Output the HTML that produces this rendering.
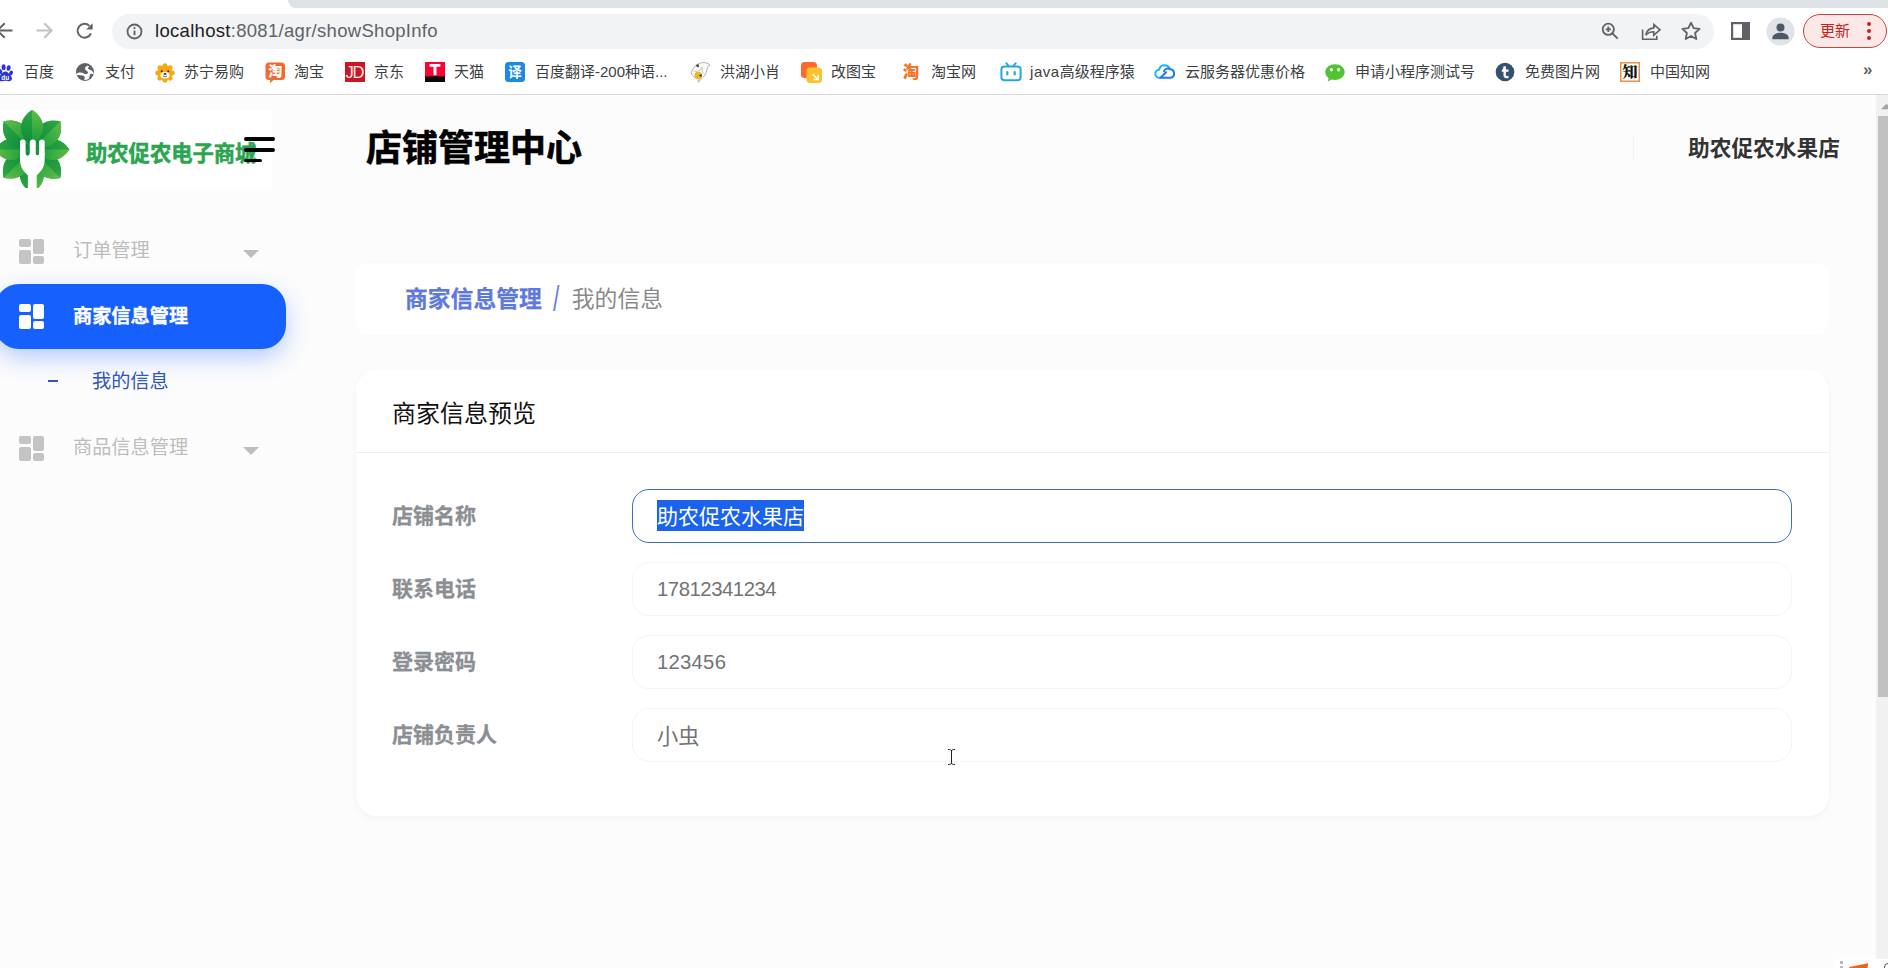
<!DOCTYPE html>
<html lang="zh-CN">
<head>
<meta charset="utf-8">
<title>店铺管理中心</title>
<style>
*{box-sizing:border-box;margin:0;padding:0}
html,body{width:1888px;height:968px;overflow:hidden;background:#fcfcfc}
body{position:relative;font-family:"Liberation Sans","Noto Sans CJK SC",sans-serif;color:#333}
.abs{position:absolute}
/* ---------- browser chrome ---------- */
#chrome{position:absolute;left:0;top:0;width:1888px;height:95px;background:#fff;border-bottom:1px solid #d9dadc}
#tabstrip{position:absolute;left:288px;top:0;width:1600px;height:8px;background:#dee1e6;border-bottom-left-radius:8px}
#omni{position:absolute;left:112px;top:14px;width:1602px;height:35px;border-radius:18px;background:#f1f3f4}
#url{position:absolute;left:155px;top:19px;font-size:18.5px;line-height:24px;color:#202124;white-space:nowrap;letter-spacing:.3px}
#url span{color:#5f6368}
.bm{position:absolute;top:61px;height:22px;line-height:22px;font-size:15px;color:#3c4043;white-space:nowrap}
.ico{position:absolute}
#upd{position:absolute;left:1803px;top:14px;width:84px;height:34px;border-radius:17px;border:1.5px solid #c9433e;background:#fce8e6}
#upd i{position:absolute;left:63px;width:4px;height:4px;border-radius:2px;background:#c5221f}
#upd i:nth-of-type(1){top:6.5px}#upd i:nth-of-type(2){top:13.5px}#upd i:nth-of-type(3){top:20.5px}
#upd b{position:absolute;left:16px;top:4px;font-weight:400;font-size:15px;line-height:24px;color:#c5221f}
/* ---------- page ---------- */
#page{position:absolute;left:0;top:95px;width:1876px;height:873px;background:#fcfcfc;overflow:hidden}
#sb{position:absolute;left:1876px;top:95px;width:12px;height:873px;background:#f1f1f1}
#sb i{position:absolute;left:2px;top:21px;width:10px;height:581px;background:#c1c1c1}
#logo{position:absolute;left:0;top:15px;width:272px;height:79px;background:#fff;overflow:hidden}
#logo span{position:absolute;left:86px;top:28px;font-size:21.3px;line-height:32px;font-weight:700;color:#2ba550;-webkit-text-stroke:.55px #2ba550;white-space:nowrap;letter-spacing:0}
.ham{position:absolute;left:244px;height:3.5px;border-radius:2px;background:#050505}
h1{position:absolute;left:366px;top:27px;-webkit-text-stroke:.6px #000;font-size:36px;line-height:54px;font-weight:700;color:#000;white-space:nowrap}
#shop{position:absolute;left:1688px;top:37.5px;font-size:21.7px;line-height:32px;font-weight:700;color:#333;white-space:nowrap}
.mi{position:absolute;left:73px;font-size:19.2px;line-height:30px;color:#bdbdbd;white-space:nowrap}
.grid{position:absolute;left:19px;width:25px;height:25px}
.grid i{position:absolute;background:#c4c4c4;border-radius:2px}
.grid i:nth-child(1){left:0;top:0;width:11.5px;height:8px}
.grid i:nth-child(2){left:0;top:10.5px;width:11.5px;height:14.5px}
.grid i:nth-child(3){left:13.5px;top:0;width:11.5px;height:14.5px}
.grid i:nth-child(4){left:13.5px;top:17px;width:11.5px;height:8px}
.caret{position:absolute;left:243px;width:0;height:0;border-left:8px solid transparent;border-right:8px solid transparent;border-top:8px solid #bdbdbd}
#pill{position:absolute;left:-5px;top:189px;width:291px;height:65px;border-radius:24px;background:#1660fd;box-shadow:0 9px 24px rgba(22,96,253,.3)}
#pill .mi{left:78px;top:18px;color:#fff;font-weight:700;-webkit-text-stroke:.35px #fff}
#pill .grid{left:24px;top:20px}
#pill .grid i{background:#fff}
.card{position:absolute;background:#fff;border-radius:18px}
#bc{left:355px;top:168px;width:1474px;height:72px;border-radius:14px;box-shadow:0 0 10px rgba(0,0,0,.012)}
#bc .t{position:absolute;left:50px;top:18.500px;font-size:22.8px;line-height:34px;white-space:nowrap;color:#8a8a8a}
#bc .t b{color:#5d79de;-webkit-text-stroke:.25px #5d79de;font-weight:700}
#bc .t em{font-style:normal;color:#6a7fdc;font-size:23px;display:inline-block;width:30px;text-align:center;vertical-align:0;line-height:30px;transform:translate(-.5px,0) scaleY(1.5)}
#main{left:356px;top:275px;width:1473px;height:446px;border-radius:21px;box-shadow:0 3px 7px rgba(0,0,0,.035),0 0 2px rgba(0,0,0,.02)}
#main h2{position:absolute;left:36px;top:25.5px;font-size:24px;line-height:36px;font-weight:400;color:#111;white-space:nowrap}
#main hr{position:absolute;left:0;top:82px;width:1473px;height:1px;border:0;background:#efefef}
.lb{position:absolute;left:36px;font-size:21px;line-height:32px;font-weight:700;color:#8b8e93;-webkit-text-stroke:.3px #8b8e93;white-space:nowrap}
.ip{position:absolute;left:276px;width:1160px;height:53.5px;border-radius:17px;border:1px solid #f4f4f4;background:#fff;font-size:20.3px;line-height:52px;color:#737373;padding-left:24px;white-space:nowrap}
.ip.f{border:1px solid #3d6ccb;font-size:21px}
.ip.f span{position:absolute;left:24px;top:10px;line-height:33.5px;height:30.5px;overflow:hidden;background:#1b62ee;color:#fff}
</style>
</head>
<body>
<div id="chrome">
  <div id="tabstrip"></div>
  <div id="omni"></div>
  <div id="url">localhost<span>:8081/agr/showShopInfo</span></div>

  <!-- nav icons -->
  <svg class="ico" style="left:-4px;top:22px" width="17" height="17" viewBox="0 0 17 17" fill="none" stroke="#5f6368" stroke-width="2"><path d="M16.5 8.5H1.5M8.7 1.2L1.4 8.5l7.3 7.3"/></svg>
  <svg class="ico" style="left:36px;top:22px" width="17" height="17" viewBox="0 0 17 17" fill="none" stroke="#c0c2c5" stroke-width="2"><path d="M0.5 8.5H15.5M8.3 1.2l7.3 7.3-7.3 7.3"/></svg>
  <svg class="ico" style="left:75px;top:21px" width="20" height="20" viewBox="0 0 20 20" fill="none" stroke="#5f6368" stroke-width="2"><path d="M15.9 12.3A6.9 6.9 0 1 1 14.4 4.9"/><path d="M17.6 2.2v6.4h-6.4z" fill="#5f6368" stroke="none"/></svg>
  <svg class="ico" style="left:125px;top:22px" width="19" height="19" viewBox="0 0 19 19" fill="none" stroke="#5f6368" stroke-width="1.8"><circle cx="9.5" cy="9.5" r="7"/><path d="M9.5 8.6v4.6" stroke-width="1.9"/><circle cx="9.5" cy="6.1" r="1.1" fill="#5f6368" stroke="none"/></svg>
  <!-- omnibox right icons -->
  <svg class="ico" style="left:1600px;top:21px" width="20" height="20" viewBox="0 0 20 20" fill="none" stroke="#5f6368" stroke-width="1.8"><circle cx="8.3" cy="8.3" r="5.6"/><path d="M12.5 12.5l5.2 5.2M5.6 8.3h5.4M8.3 5.6v5.4"/></svg>
  <svg class="ico" style="left:1640px;top:21px" width="22" height="20" viewBox="0 0 22 20" fill="none" stroke="#5f6368" stroke-width="1.6"><path d="M2.6 8.6v9.6h14.2v-3.4"/><path d="M5.8 14.2c.8-4.6 3.6-6.9 8-7.3V3.4l6.2 5.4-6.2 5.4v-3.5c-3.6 0-6 1-8 3.5z"/></svg>
  <svg class="ico" style="left:1680px;top:20px" width="22" height="22" viewBox="0 0 22 22" fill="none" stroke="#5f6368" stroke-width="1.8" stroke-linejoin="round"><path d="M11 2.6l2.6 5.6 6 .7-4.5 4.1 1.2 6L11 16l-5.3 3 1.2-6L2.4 8.9l6-.7z"/></svg>
  <svg class="ico" style="left:1731px;top:22px" width="19" height="18" viewBox="0 0 19 18"><rect x="1.1" y="1.1" width="16.8" height="15.8" fill="#fff" stroke="#5f6368" stroke-width="2.2"/><rect x="11" y="0" width="8" height="18" fill="#5f6368"/></svg>
  <svg class="ico" style="left:1766px;top:17px" width="29" height="29" viewBox="0 0 29 29"><circle cx="14.5" cy="14.5" r="14" fill="#e1e3e8"/><circle cx="14.5" cy="10.6" r="4" fill="#4d5868"/><path d="M6.4 20.6c0-3.6 5.4-4.9 8.1-4.9s8.1 1.3 8.1 4.9v1.6H6.4z" fill="#4d5868"/></svg>
  <div id="upd"><b>更新</b><i></i><i></i><i></i></div>

  <!-- bookmarks -->
  <svg class="ico" style="left:-3px;top:63px" width="16" height="20" viewBox="0 0 16 20"><g fill="#2932e1"><ellipse cx="3.2" cy="8.6" rx="2" ry="2.7" transform="rotate(-18 3.2 8.6)"/><ellipse cx="6.6" cy="4.2" rx="2" ry="2.9"/><ellipse cx="11.6" cy="5" rx="2" ry="2.8" transform="rotate(14 11.6 5)"/><ellipse cx="14" cy="10" rx="1.8" ry="2.5" transform="rotate(20 14 10)"/><path d="M8.4 8.4c2 0 3 1.700 4.400 3.300 1.400 1.500 2.400 2.500 2.100 4.300-.3 1.800-1.900 2.300-3.500 2.200-1.400-.1-2.200-.4-3.400-.4-1.300 0-2.400.5-3.900.4-1.700-.1-2.900-1.300-2.700-3 .2-1.600 1.500-2.400 2.700-3.700 1.300-1.400 2.200-3.100 4.300-3.100z"/></g><text x="8.200" y="16.600" font-size="6.500" font-weight="700" fill="#fff" text-anchor="middle" font-family="Liberation Sans,sans-serif">du</text></svg>
  <div class="bm" style="left:24px">百度</div>
  <svg class="ico" style="left:75px;top:62px" width="20" height="20" viewBox="0 0 20 20"><defs><clipPath id="gc"><circle cx="10" cy="10" r="9"/></clipPath></defs><circle cx="10" cy="10" r="9" fill="#5f6368"/><path clip-path="url(#gc)" d="M1 12.200C4 10 7 10.400 8.800 11.600 10.400 12.600 12.600 12.200 13 10.600 13.300 9.300 11.600 8.900 10.600 7.900 9.400 6.700 10.200 4.600 12.600 3.700L14.400 4.400C13 5.100 12.600 6.200 13.500 7 14.800 8.100 16.800 8 17.800 9.700L19.500 12.500C17 11 15.300 11.700 14.800 12.900 14.200 14.400 14.900 15.500 13.800 16.700 12.600 18 10.200 18.100 8.700 17.400 10 16.500 10.200 15.300 9.400 14.400 8.400 13.300 6.600 13.600 5.200 13.300 3.600 13 2 13 1 13.800Z" fill="#fff"/></svg>
  <div class="bm" style="left:105px">支付</div>
  <svg class="ico" style="left:155px;top:63px" width="20" height="20" viewBox="0 0 22 22"><g fill="#f9a90f"><circle cx="11" cy="11" r="8.200"/><circle cx="11" cy="2.900" r="2.700"/><circle cx="16.700" cy="5.300" r="2.700"/><circle cx="19.100" cy="11" r="2.700"/><circle cx="16.700" cy="16.700" r="2.700"/><circle cx="11" cy="19.100" r="2.700"/><circle cx="5.300" cy="16.700" r="2.700"/><circle cx="2.900" cy="11" r="2.700"/><circle cx="5.300" cy="5.300" r="2.700"/></g><ellipse cx="11" cy="13.400" rx="5" ry="3.600" fill="#fff"/><ellipse cx="11" cy="12" rx="1.500" ry="1" fill="#2b2118"/><path d="M8.800 14c1.300 1.600 3.100 1.600 4.400 0" fill="none" stroke="#2b2118" stroke-width=".8"/><circle cx="7.400" cy="9" r="1.050" fill="#2b2118"/><circle cx="14.600" cy="9" r="1.050" fill="#2b2118"/></svg>
  <div class="bm" style="left:184px">苏宁易购</div>
  <svg class="ico" style="left:264px;top:61px" width="22" height="24" viewBox="0 0 22 24"><path d="M5 1.500h12.500a3.500 3.500 0 0 1 3.500 3.500v10.500a3.500 3.500 0 0 1-3.500 3.500H9.500l-3.700 3.200.4-3.200H5a3.500 3.500 0 0 1-3.500-3.500V5A3.500 3.500 0 0 1 5 1.500z" fill="#f26a2d"/><text x="11.200" y="15.400" font-size="14" font-weight="900" fill="#fff" text-anchor="middle" font-family="Liberation Sans,Noto Sans CJK SC,sans-serif">淘</text></svg>
  <div class="bm" style="left:294px">淘宝</div>
  <svg class="ico" style="left:345px;top:62px" width="20" height="20" viewBox="0 0 20 20"><rect width="20" height="20" fill="#c81623"/><text x="9.300" y="16" font-size="16.500" font-weight="400" fill="#fff" text-anchor="middle" letter-spacing="-1.300" font-family="Liberation Sans,sans-serif" opacity=".9">JD</text></svg>
  <div class="bm" style="left:374px">京东</div>
  <svg class="ico" style="left:425px;top:62px" width="20" height="20" viewBox="0 0 20 20"><rect width="20" height="20" fill="#0a0a0a"/><path d="M0 0h20v13.600c-1.600 1.500-2.700 1.800-4 .7H4c-1.300 1.100-2.400.8-4-.7z" fill="#ff0036"/><path d="M4.600 2h10.800v2.800h-3.900v8.400H8.500V4.800H4.600z" fill="#fff"/></svg>
  <div class="bm" style="left:454px">天猫</div>
  <svg class="ico" style="left:505px;top:62px" width="20" height="20" viewBox="0 0 20 20"><rect width="20" height="20" rx="3.500" fill="#1e88e5"/><text x="10" y="15" font-size="13.500" font-weight="700" fill="#fff" text-anchor="middle" font-family="Liberation Sans,Noto Sans CJK SC,sans-serif">译</text></svg>
  <div class="bm" style="left:535px">百度翻译-200种语...</div>
  <svg class="ico" style="left:690px;top:62px" width="22" height="22" viewBox="0 0 22 22"><path d="M1.200 10.800C2.600 6.400 5.600 2.600 10 1.100c3.400-1.100 7.400-.6 10.300 2.200-1.600.3-2.600 1.100-2.900 2.600-.6 3.600-1.700 7-4.800 9.800-1.400 1.300-2.800 2.700-4.400 4.600.1-1.500.5-2.700 1.200-3.800-3.600.3-6.800-1.800-8.200-5.700z" fill="#fbfbfb" stroke="#a9a9a9" stroke-width=".9"/><path d="M3.600 8.600c2.400 1.900 6.400.6 8.700-3.600M12.300 5c-.6 3-.6 5.600 1.400 6.200" fill="none" stroke="#b9b2b8" stroke-width=".8"/><path d="M5.800 3.300c1.100-.9 2.200-1.200 3-.9l.3 2.600c-1.100.3-2 .1-2.700-.5z" fill="#5b4654"/><circle cx="8.200" cy="13.400" r="3.700" fill="#eab81f"/><path d="M11.900 12.200L8.800 13.300l2.700 2z" fill="#3a2c18"/></svg>
  <div class="bm" style="left:720px">洪湖小肖</div>
  <svg class="ico" style="left:800px;top:61px" width="23" height="23" viewBox="0 0 23 23"><rect x="1" y="1" width="16" height="16" rx="3.500" fill="#fb6a2c"/><rect x="6.500" y="6.500" width="15.500" height="15.500" rx="3.500" fill="#fdc22e"/><path d="M12.500 13l5.300 5.300M18.200 14v4.600h-4.600" fill="none" stroke="#fff" stroke-width="1.500"/></svg>
  <div class="bm" style="left:831px">改图宝</div>
  <svg class="ico" style="left:900px;top:61px" width="22" height="22" viewBox="0 0 22 22"><text x="11" y="16.800" font-size="16.500" font-weight="900" fill="#f37327" text-anchor="middle" font-family="Liberation Sans,Noto Sans CJK SC,sans-serif">淘</text></svg>
  <div class="bm" style="left:931px">淘宝网</div>
  <svg class="ico" style="left:1000px;top:62px" width="22" height="20" viewBox="0 0 22 20" fill="none" stroke="#23a9df" stroke-width="2" stroke-linecap="round"><rect x="1.400" y="4.600" width="19.200" height="13.600" rx="3"/><path d="M6.400 1.300l2.300 2.800M15.600 1.300l-2.300 2.800"/><path d="M7.300 10v2.400M14.700 10v2.400" stroke-width="2.200"/></svg>
  <div class="bm" style="left:1030px"><span style="letter-spacing:.55px">java</span>高级程序猿</div>
  <svg class="ico" style="left:1154px;top:63px" width="22" height="18" viewBox="0 0 22 18" fill="none" stroke-width="2" stroke-linecap="round" stroke-linejoin="round"><path d="M6.200 14.800h-.6a4 4 0 0 1-.5-8 5.600 5.600 0 0 1 10.600-1.200" stroke="#19b5f0"/><path d="M10 8.200a4 4 0 0 1 6.300-1.900 4.300 4.300 0 0 1 .2 8.500H6.400l5.800-5.500" stroke="#2378e8"/></svg>
  <div class="bm" style="left:1185px">云服务器优惠价格</div>
  <svg class="ico" style="left:1324px;top:62px" width="22" height="22" viewBox="0 0 22 22"><path d="M11 2.200c5.400 0 9.700 3.500 9.700 7.900s-4.300 7.900-9.700 7.900c-1.300 0-2.500-.2-3.600-.5l-3.700 2.100.9-3.400C2.500 14.700 1.300 12.500 1.300 10.100c0-4.400 4.300-7.900 9.700-7.900z" fill="#51c332"/><ellipse cx="7.400" cy="7.800" rx="1.600" ry="1.700" fill="#fff"/><ellipse cx="14.600" cy="7.800" rx="1.600" ry="1.700" fill="#fff"/></svg>
  <div class="bm" style="left:1355px">申请小程序测试号</div>
  <svg class="ico" style="left:1495px;top:62px" width="20" height="20" viewBox="0 0 20 20"><circle cx="10" cy="10" r="9.300" fill="#34526f"/><path d="M8.500 4.300h2.400v3.200h2.600v2.200h-2.600v3.200c0 1.100.9 1.400 2.600.9v2.100c-3 .9-5-.1-5-2.600V9.700H6.800V7.900c1.100-.4 1.600-1.600 1.700-3.600z" fill="#fff"/></svg>
  <div class="bm" style="left:1525px">免费图片网</div>
  <svg class="ico" style="left:1620px;top:62px" width="20" height="20" viewBox="0 0 20 20"><rect x=".75" y=".75" width="18.500" height="18.500" fill="#fffaf4" stroke="#e8914b" stroke-width="1.500"/><text x="10" y="15.300" font-size="15" font-weight="900" fill="#111" text-anchor="middle" font-family="Noto Serif CJK SC,Liberation Serif,serif">知</text></svg>
  <div class="bm" style="left:1650px">中国知网</div>
  <div class="bm" style="left:1863px;top:59px;font-size:17px;color:#5f6368;font-weight:700">»</div>
</div>
<div id="page">
  <div id="logo"><svg class="ico" style="left:-10px;top:-3px" width="84" height="86" viewBox="-42 -42.600 84 86"><defs><linearGradient id="la" gradientUnits="userSpaceOnUse" x1="0" y1="-6" x2="0" y2="-40"><stop offset="0" stop-color="#0b8c39"/><stop offset="1" stop-color="#2fa744"/></linearGradient><linearGradient id="lb" gradientUnits="userSpaceOnUse" x1="0" y1="-6" x2="0" y2="-40"><stop offset="0" stop-color="#159a3e"/><stop offset="1" stop-color="#62bd45"/></linearGradient><clipPath id="lc"><rect x="-42" y="-42.600" width="84" height="80.900"/></clipPath></defs><g clip-path="url(#lc)"><circle r="8" fill="#0f923b"/><g transform="rotate(180) scale(1.078)"><path d="M0 -3 C -15.500 -15, -15 -31, 0 -40.800 C 15 -31, 15.500 -15, 0 -3 Z" fill="url(#lb)"/><path d="M0 -3 L0 -40.800 C 15 -31, 15.500 -15, 0 -3 Z" fill="url(#la)"/></g><g transform="rotate(135) scale(0.985)"><path d="M0 -3 C -15.500 -15, -15 -31, 0 -40.800 C 15 -31, 15.500 -15, 0 -3 Z" fill="url(#la)"/><path d="M0 -3 L0 -40.800 C 15 -31, 15.500 -15, 0 -3 Z" fill="url(#lb)"/></g><g transform="rotate(225) scale(0.985)"><path d="M0 -3 C -15.500 -15, -15 -31, 0 -40.800 C 15 -31, 15.500 -15, 0 -3 Z" fill="url(#lb)"/><path d="M0 -3 L0 -40.800 C 15 -31, 15.500 -15, 0 -3 Z" fill="url(#la)"/></g><g transform="rotate(90) scale(0.917)"><path d="M0 -3 C -15.500 -15, -15 -31, 0 -40.800 C 15 -31, 15.500 -15, 0 -3 Z" fill="url(#la)"/><path d="M0 -3 L0 -40.800 C 15 -31, 15.500 -15, 0 -3 Z" fill="url(#lb)"/></g><g transform="rotate(270) scale(0.917)"><path d="M0 -3 C -15.500 -15, -15 -31, 0 -40.800 C 15 -31, 15.500 -15, 0 -3 Z" fill="url(#lb)"/><path d="M0 -3 L0 -40.800 C 15 -31, 15.500 -15, 0 -3 Z" fill="url(#la)"/></g><g transform="rotate(45) scale(0.985)"><path d="M0 -3 C -15.500 -15, -15 -31, 0 -40.800 C 15 -31, 15.500 -15, 0 -3 Z" fill="url(#la)"/><path d="M0 -3 L0 -40.800 C 15 -31, 15.500 -15, 0 -3 Z" fill="url(#lb)"/></g><g transform="rotate(315) scale(0.985)"><path d="M0 -3 C -15.500 -15, -15 -31, 0 -40.800 C 15 -31, 15.500 -15, 0 -3 Z" fill="url(#la)"/><path d="M0 -3 L0 -40.800 C 15 -31, 15.500 -15, 0 -3 Z" fill="url(#lb)"/></g><g transform="rotate(0) scale(0.975)"><path d="M0 -3 C -15.500 -15, -15 -31, 0 -40.800 C 15 -31, 15.500 -15, 0 -3 Z" fill="url(#la)"/><path d="M0 -3 L0 -40.800 C 15 -31, 15.500 -15, 0 -3 Z" fill="url(#lb)"/></g><g fill="#fff"><path d="M-12 -7.400 a2.800 2.800 0 0 1 5.600 0 V6 H-12 Z"/><path d="M-2.200 -7.200 a3 3 0 0 1 6 0 V6 H-2.200 Z"/><path d="M7.100 -7.400 a2.800 2.800 0 0 1 5.600 0 V6 H7.100 Z"/><path d="M-12 4 H-6.400 a2.100 2.100 0 0 0 4.200 0 H3.800 a1.650 1.650 0 0 0 3.300 0 H12.700 V10 C12.700 18.500 8.500 22 4.700 26 V39 H-4.100 V26 C-7.900 22 -12 18.500 -12 10 Z"/></g></g></svg><span>助农促农电子商城</span></div>
  <div class="ham" style="top:42.200px;width:31px"></div>
  <div class="ham" style="top:53px;width:31px"></div>
  <div class="ham" style="top:63.800px;width:18px"></div>
  <h1>店铺管理中心</h1>
  <div id="shop">助农促农水果店</div>

  <div class="grid" style="top:144px"><i></i><i></i><i></i><i></i></div>
  <div class="mi" style="top:141px">订单管理</div>
  <div class="caret" style="top:155px"></div>

  <div id="pill"><div class="grid"><i></i><i></i><i></i><i></i></div><div class="mi">商家信息管理</div></div>

  <div class="abs" style="left:48px;top:285px;width:10px;height:2px;background:#2f55c0"></div>
  <div class="mi" style="left:92px;top:272px;color:#2f55c0">我的信息</div>

  <div class="grid" style="top:341px"><i></i><i></i><i></i><i></i></div>
  <div class="mi" style="top:338px">商品信息管理</div>
  <div class="caret" style="top:352px"></div>

  <div class="card" id="bc"><div class="t"><b>商家信息管理</b><em>/</em>我的信息</div></div>

  <div class="card" id="main">
    <h2>商家信息预览</h2>
    <hr>
    <div class="lb" style="top:130px">店铺名称</div>
    <div class="ip f" style="top:119px"><span>助农促农水果店</span></div>
    <div class="lb" style="top:203px">联系电话</div>
    <div class="ip" style="top:192px;letter-spacing:-.45px">17812341234</div>
    <div class="lb" style="top:276px">登录密码</div>
    <div class="ip" style="top:265px;letter-spacing:.25px">123456</div>
    <div class="lb" style="top:349px">店铺负责人</div>
    <div class="ip" style="top:338px;font-size:21.200px;line-height:55.500px">小虫</div>
  </div>
</div>
<svg class="ico" style="left:946px;top:748px" width="11" height="18" viewBox="0 0 11 18" fill="none" stroke="#222" stroke-width="1"><path d="M5.500 2.500v13M2 1.500c1.800 0 3.500 .2 3.500 1.400 0-1.200 1.700-1.400 3.500-1.400M2 16.500c1.800 0 3.500-.2 3.500-1.400 0 1.200 1.700 1.400 3.500 1.400"/></svg>
<div id="sb"><i></i><svg class="ico" style="left:4px;top:8px" width="8" height="7" viewBox="0 0 8 7"><path d="M1 6.200L6.500 .7 12 6.200z" fill="#a3a3a3"/></svg></div>
<div class="abs" style="left:1633px;top:136px;width:1px;height:24px;background:#f3f3f3"></div>
<div class="abs" style="left:1834px;top:959px;width:54px;height:9px;background:#fff;overflow:hidden"><div class="abs" style="left:15px;top:5.500px;width:18px;height:10px;background:#f2601d;transform:skewX(-20deg) rotate(-12deg)"></div><div class="abs" style="left:6px;top:2px;width:3px;height:2.500px;background:#b9b9c4"></div><div class="abs" style="left:6px;top:7px;width:3px;height:2.500px;background:#b9b9c4"></div><div class="abs" style="left:50px;top:4px;width:8px;height:10px;border:1.500px solid #4a5560;border-radius:4px"></div></div>
</body>
</html>
